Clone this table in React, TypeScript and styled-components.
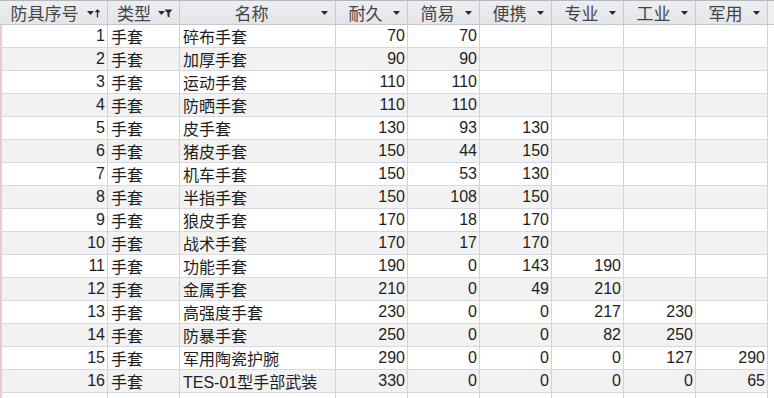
import React from 'react';
import styled, { createGlobalStyle } from 'styled-components';

const GlobalStyle = createGlobalStyle`
  html, body {
    margin: 0;
    padding: 0;
    background: #ffffff;
  }
  body {
    font-family: "Liberation Sans", "Noto Sans CJK SC", sans-serif;
  }
`;

type Row = {
  id: number;
  kind: string;
  name: string;
  values: (number | null)[];
};

const rows: Row[] = [
  { id: 1, kind: '手套', name: '碎布手套', values: [70, 70, null, null, null, null] },
  { id: 2, kind: '手套', name: '加厚手套', values: [90, 90, null, null, null, null] },
  { id: 3, kind: '手套', name: '运动手套', values: [110, 110, null, null, null, null] },
  { id: 4, kind: '手套', name: '防晒手套', values: [110, 110, null, null, null, null] },
  { id: 5, kind: '手套', name: '皮手套', values: [130, 93, 130, null, null, null] },
  { id: 6, kind: '手套', name: '猪皮手套', values: [150, 44, 150, null, null, null] },
  { id: 7, kind: '手套', name: '机车手套', values: [150, 53, 130, null, null, null] },
  { id: 8, kind: '手套', name: '半指手套', values: [150, 108, 150, null, null, null] },
  { id: 9, kind: '手套', name: '狼皮手套', values: [170, 18, 170, null, null, null] },
  { id: 10, kind: '手套', name: '战术手套', values: [170, 17, 170, null, null, null] },
  { id: 11, kind: '手套', name: '功能手套', values: [190, 0, 143, 190, null, null] },
  { id: 12, kind: '手套', name: '金属手套', values: [210, 0, 49, 210, null, null] },
  { id: 13, kind: '手套', name: '高强度手套', values: [230, 0, 0, 217, 230, null] },
  { id: 14, kind: '手套', name: '防暴手套', values: [250, 0, 0, 82, 250, null] },
  { id: 15, kind: '手套', name: '军用陶瓷护腕', values: [290, 0, 0, 0, 127, 290] },
  { id: 16, kind: '手套', name: 'TES-01型手部武装', values: [330, 0, 0, 0, 0, 65] },
];

type Col = { title: string; icon: 'sort' | 'filter' | 'drop' };

const columns: Col[] = [
  { title: '防具序号', icon: 'sort' },
  { title: '类型', icon: 'filter' },
  { title: '名称', icon: 'drop' },
  { title: '耐久', icon: 'drop' },
  { title: '简易', icon: 'drop' },
  { title: '便携', icon: 'drop' },
  { title: '专业', icon: 'drop' },
  { title: '工业', icon: 'drop' },
  { title: '军用', icon: 'drop' },
];

const TEMPLATE = '108px 72px 156px 72px 72px 72px 72px 72px 72px 1fr';

const DropArrow = () => (
  <svg width="8" height="5" viewBox="0 0 8 5">
    <polygon points="0,0 7,0 3.5,4" fill="#2b2b2b" />
  </svg>
);

const SortIcon = () => (
  <svg width="14" height="9" viewBox="0 0 14 9">
    <polygon points="0,2 7,2 3.5,6" fill="#2b2b2b" />
    <path d="M10.5 8.5V1.2M8.5 3.2L10.5 1L12.5 3.2" stroke="#2b2b2b" strokeWidth="1.3" fill="none" />
  </svg>
);

const FilterIcon = () => (
  <svg width="15" height="9" viewBox="0 0 15 9">
    <polygon points="0,2 7,2 3.5,6" fill="#2b2b2b" />
    <path d="M6.5 0.5H14.5L11.5 4V8.5L9.5 7.5V4Z" fill="#2b2b2b" />
  </svg>
);

const Sheet = () => (
  <Grid>
    {columns.map((c) => (
      <HeadCell key={c.title}>
        <HeadTitle>{c.title}</HeadTitle>
        <HeadIcon>
          {c.icon === 'sort' ? <SortIcon /> : c.icon === 'filter' ? <FilterIcon /> : <DropArrow />}
        </HeadIcon>
      </HeadCell>
    ))}
    <HeadFiller />
    {rows.map((r) => (
      <React.Fragment key={r.id}>
        <Cell $alt={r.id % 2 === 0} $num $first>
          {r.id}
        </Cell>
        <Cell $alt={r.id % 2 === 0}>{r.kind}</Cell>
        <Cell $alt={r.id % 2 === 0}>{r.name}</Cell>
        {r.values.map((v, i) => (
          <Cell key={i} $alt={r.id % 2 === 0} $num>
            {v === null ? '' : v}
          </Cell>
        ))}
        <Filler />
      </React.Fragment>
    ))}
    {columns.map((c, i) => (
      <Cell key={'new' + c.title} $first={i === 0} />
    ))}
    <Filler />
  </Grid>
);

const App = () => {
  return (
    <>
      <GlobalStyle />
      <Page>
        <Sheet />
      </Page>
    </>
  );
};
export default App;

const Page = styled.div`
  width: 774px;
  height: 398px;
  overflow: hidden;
  background: #ffffff;
`;

const Grid = styled.div`
  display: grid;
  grid-template-columns: ${TEMPLATE};
  grid-auto-rows: 23px;
  grid-template-rows: 25px;
`;

const HeadCell = styled.div`
  box-sizing: border-box;
  display: flex;
  align-items: center;
  padding: 0 6px 0 2px;
  background: linear-gradient(#eceef1, #e3e5e9);
  border-top: 1px solid #b4b6ba;
  border-right: 1px solid #c4c7cc;
  border-bottom: 1px solid #c4c7cc;
  font-size: 17px;
  color: #444444;
  font-family: "Noto Sans CJK SC", sans-serif;
  overflow: hidden;
`;

const HeadTitle = styled.span`
  flex: 1;
  text-align: center;
  white-space: nowrap;
  line-height: 22px;
`;

const HeadIcon = styled.span`
  display: flex;
  align-items: center;
  margin-top: 1px;
`;

const HeadFiller = styled.div`
  background: #eef0f2;
  border-top: 1px solid #b4b6ba;
  border-bottom: 1px solid #c4c7cc;
`;

const Cell = styled.div<{ $alt?: boolean; $num?: boolean; $first?: boolean }>`
  box-sizing: border-box;
  display: flex;
  align-items: center;
  justify-content: ${(p) => (p.$num ? 'flex-end' : 'flex-start')};
  padding: 0 2px 0 3px;
  background: ${(p) => (p.$alt ? '#f2f2f2' : '#ffffff')};
  border-right: 1px solid #ccd4e2;
  border-bottom: 1px solid #d6d9e0;
  border-left: ${(p) => (p.$first ? '2px solid #f2c6ca' : 'none')};
  font-size: 16px;
  color: #1e1e1e;
  font-family: "Liberation Sans", "Noto Sans CJK SC", sans-serif;
  white-space: nowrap;
  overflow: hidden;
`;

const Filler = styled.div`
  background: #ffffff;
`;
